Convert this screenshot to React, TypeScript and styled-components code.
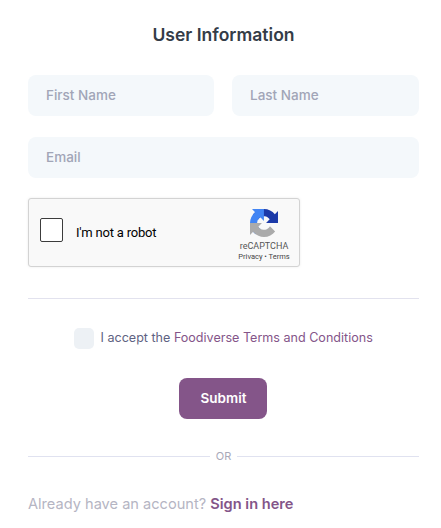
import React from "react";
import styled, { createGlobalStyle } from "styled-components";

const GlobalStyle = createGlobalStyle`
  * { box-sizing: border-box; }
  body { margin: 0; background: #fff; font-family: Inter, sans-serif; }
`;

const Page = styled.main`
  display: flex;
  flex-direction: column;
  height: 528px;
  padding: 0 22px 0 28px;
  overflow: hidden;
`;

const Title = styled.h1`
  margin: 23px 0 0;
  font-size: 17.55px;
  line-height: 24px;
  font-weight: 600;
  text-align: center;
  color: #343c47;
`;

const Fields = styled.div`
  display: grid;
  grid-template-columns: 186px 187px;
  gap: 21px 18px;
  margin-top: 28px;
`;

const Input = styled.input<{ $wide?: boolean }>`
  grid-column: ${(p) => (p.$wide ? "1 / -1" : "auto")};
  width: 100%;
  height: 41px;
  padding: 0 18px 1px;
  border: 0;
  border-radius: 8px;
  outline: none;
  background: #f4f8fb;
  color: #2d3540;
  font: 500 13.5px Inter, sans-serif;
  &::placeholder { color: #a1a5b7; opacity: 1; }
`;

const Captcha = styled.div`
  display: flex;
  justify-content: space-between;
  width: 272px;
  height: 69px;
  margin-top: 20px;
  padding: 0 9px 0 11px;
  border: 1px solid #d3d3d3;
  border-radius: 3px;
  background: #f9f9f9;
  box-shadow: 0 0 3px rgba(0, 0, 0, 0.08);
  font-family: Roboto, sans-serif;
  color: #000;
`;

const RobotLabel = styled.label`
  display: flex;
  align-items: flex-start;
  gap: 13px;
  padding-top: 19px;
  font-size: 13px;
  letter-spacing: -0.2px;
  line-height: 29px;
`;

const RobotBox = styled.span`
  width: 23px;
  height: 24px;
  border: 1px solid #3c3c3c;
  border-radius: 2px;
  background: #fff;
`;

const Brand = styled.div`
  display: flex;
  flex-direction: column;
  align-items: center;
  padding-top: 10px;
  width: 52px;
  color: #555;
`;

const BrandName = styled.div`
  margin-top: 4px;
  font-size: 9px;
  line-height: 11px;
  white-space: nowrap;
`;

const BrandLinks = styled.div`
  font-size: 7.5px;
  line-height: 10px;
  white-space: nowrap;
  color: #444;
`;

const Divider = styled.hr`
  width: 100%;
  height: 1px;
  margin: 31px 0 0;
  border: 0;
  background: #e2e2ee;
`;

const Terms = styled.label`
  display: flex;
  align-items: center;
  gap: 6.5px;
  height: 21px;
  margin: 29px 0 0 46px;
  font-size: 12.57px;
  line-height: 19px;
  white-space: nowrap;
  color: #5e6282;
`;

const TermsText = styled.span`
  padding-bottom: 2px;
`;

const TermsBox = styled.span`
  width: 20px;
  height: 21px;
  border-radius: 5px;
  background: #edf1f5;
`;

const Link = styled.a<{ $strong?: boolean }>`
  color: #845589;
  font-weight: ${(p) => (p.$strong ? 600 : 400)};
  text-decoration: none;
`;

const Submit = styled.button`
  align-self: center;
  width: 88px;
  height: 41px;
  margin: 29px 1px 0 0;
  padding: 0 0 1px 1px;
  border: 0;
  border-radius: 8px;
  background: #845589;
  color: #fff;
  font: 600 13.5px Inter, sans-serif;
`;

const Or = styled.div`
  display: flex;
  align-items: center;
  gap: 6px;
  height: 14px;
  margin-top: 30px;
  font-size: 11px;
  font-weight: 400;
  line-height: 14px;
  color: #a9a9b9;
  &::before, &::after {
    content: "";
    flex: 1;
    height: 1px;
    background: #e0e2f0;
  }
`;

const Account = styled.p`
  margin: 31px 0 0;
  font-size: 14.6px;
  line-height: 20px;
  color: #b5b5c3;
  white-space: nowrap;
`;

function RecaptchaLogo() {
  return (
    <svg width="28" height="28" viewBox="0 0 64 64" aria-hidden="true">
      <path fill="#1c3aa9" d="M64 31.955l-.033-1.37V4.687l-7.16 7.16C50.948 4.674 42.033.093 32.05.093c-10.4 0-19.622 4.96-25.458 12.64l11.736 11.86a15.55 15.55 0 0 1 4.754-5.334c2.05-1.6 4.952-2.906 8.968-2.906.485 0 .86.057 1.135.163 4.976.393 9.288 3.14 11.828 7.124l-8.307 8.307L64 31.953" />
      <path fill="#4285f4" d="M31.862.094l-1.37.033H4.594l7.16 7.16C4.58 13.147 0 22.06 0 32.046c0 10.4 4.96 19.622 12.64 25.458L24.5 45.768a15.55 15.55 0 0 1-5.334-4.754c-1.6-2.05-2.906-4.952-2.906-8.968 0-.485.057-.86.163-1.135.393-4.976 3.14-9.288 7.124-11.828l8.307 8.307L31.86.095" />
      <path fill="#ababab" d="M.001 32.045l.033 1.37v25.898l7.16-7.16c5.86 7.173 14.774 11.754 24.76 11.754 10.4 0 19.622-4.96 25.458-12.64l-11.736-11.86a15.55 15.55 0 0 1-4.754 5.334c-2.05 1.6-4.952 2.906-8.968 2.906-.485 0-.86-.057-1.135-.163-4.976-.393-9.288-3.14-11.828-7.124l8.307-8.307c-10.522.04-22.4.066-27.295-.005" />
    </svg>
  );
}

export default function App() {
  return (
    <>
      <GlobalStyle />
      <Page>
        <Title>User Information</Title>
        <Fields>
          <Input placeholder="First Name" />
          <Input placeholder="Last Name" />
          <Input $wide placeholder="Email" />
        </Fields>
        <Captcha>
          <RobotLabel>
            <RobotBox />
            I'm not a robot
          </RobotLabel>
          <Brand>
            <RecaptchaLogo />
            <BrandName>reCAPTCHA</BrandName>
            <BrandLinks>Privacy • Terms</BrandLinks>
          </Brand>
        </Captcha>
        <Divider />
        <Terms>
          <TermsBox />
          <TermsText>
            I accept the <Link>Foodiverse Terms and Conditions</Link>
          </TermsText>
        </Terms>
        <Submit>Submit</Submit>
        <Or>OR</Or>
        <Account>
          Already have an account? <Link $strong>Sign in here</Link>
        </Account>
      </Page>
    </>
  );
}
